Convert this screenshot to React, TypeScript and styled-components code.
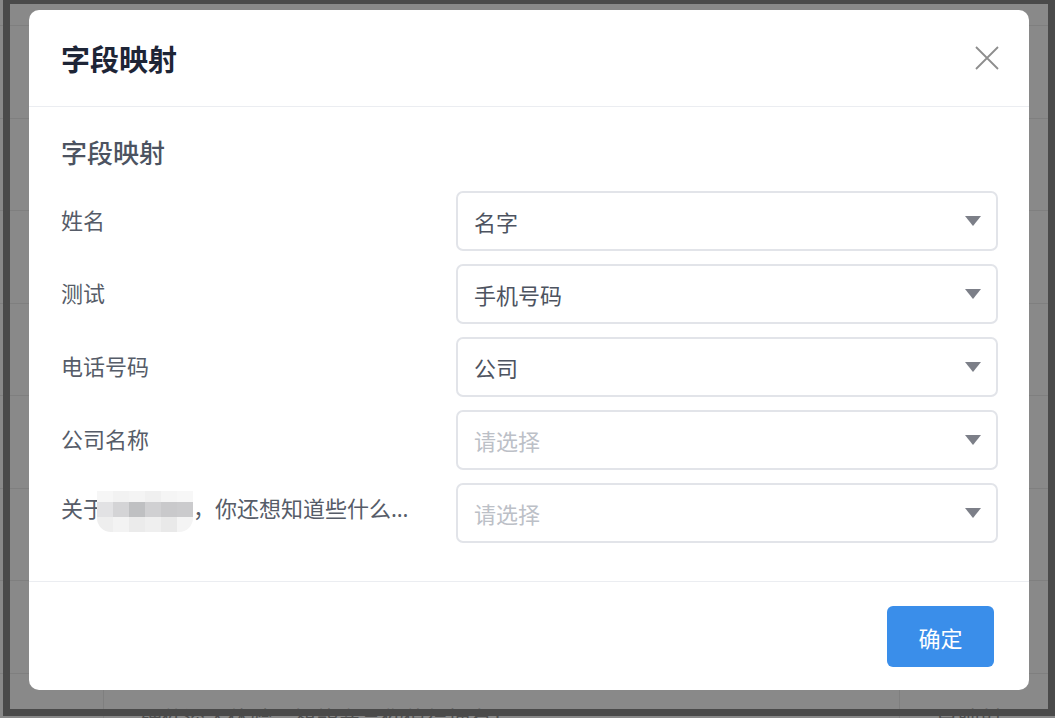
import React from 'react'
import styled, { createGlobalStyle } from 'styled-components'

const GlobalStyle = createGlobalStyle`
  html, body {
    margin: 0;
    padding: 0;
  }
  body {
    font-family: "Noto Sans CJK SC", "Noto Sans", sans-serif;
  }
`

const fields = [
  { label: '姓名', value: '名字' },
  { label: '测试', value: '手机号码' },
  { label: '电话号码', value: '公司' },
  { label: '公司名称', value: '' },
]

// pixelated blur over the hidden product name
const mosaic = [
  ['#f6f6f6', '#f2f2f2', '#f4f4f4', '#f0f0f0', '#f5f5f5', '#f7f7f7'],
  ['#e2e2e4', '#d4d4d6', '#bfc0c2', '#d0d0d2', '#c9c9cb', '#cbcbcd'],
  ['#eeeeee', '#f3f3f3', '#ebebeb', '#efefef', '#e9e9e9', '#f4f4f4'],
]

const App: React.FC = () => {
  return (
    <>
      <GlobalStyle />
      <Screen>
        <BackTable>
          {Array.from({ length: 8 }).map((_, i) => (
            <BackRow key={i}>
              <BackCell />
              <BackCell>{i === 7 ? '硬件深入体验，智能产品你值得拥有！' : ''}</BackCell>
              <BackCell>{i === 7 ? '已映射' : ''}</BackCell>
            </BackRow>
          ))}
        </BackTable>

        <Mask>
          <Dialog>
            <Header>
              <Title>字段映射</Title>
              <CloseButton aria-label="close">
                <svg width="24" height="24" viewBox="0 0 24 24">
                  <path d="M1 1 L23 23 M23 1 L1 23" stroke="#8d8d8d" strokeWidth="1.8" fill="none" />
                </svg>
              </CloseButton>
            </Header>

            <Body>
              <SectionTitle>字段映射</SectionTitle>
              <Rows>
                {fields.map((f) => (
                  <Row key={f.label}>
                    <Label>{f.label}</Label>
                    <Select>
                      <SelectText $placeholder={!f.value}>{f.value || '请选择'}</SelectText>
                      <Caret />
                    </Select>
                  </Row>
                ))}
                <Row>
                  <Label>
                    关于
                    <Mosaic>
                      {mosaic.flat().map((c, i) => (
                        <MosaicCell key={i} $color={c} />
                      ))}
                    </Mosaic>
                    ，你还想知道些什么呢？
                  </Label>
                  <Select>
                    <SelectText $placeholder>请选择</SelectText>
                    <Caret />
                  </Select>
                </Row>
              </Rows>
            </Body>

            <Footer>
              <PrimaryButton>确定</PrimaryButton>
            </Footer>
          </Dialog>
        </Mask>

        <Frame />
      </Screen>
    </>
  )
}

const Screen = styled.div`
  position: relative;
  width: 1055px;
  height: 718px;
  overflow: hidden;
  background: #898989;
`

const BackTable = styled.div`
  padding-top: 25px;
  display: flex;
  flex-direction: column;
`

const BackRow = styled.div`
  display: grid;
  grid-template-columns: 103px 796px 1fr;
  height: 92.5px;
  flex-shrink: 0;
  border-top: 1px solid #7f7f7f;
  box-sizing: border-box;
`

const BackCell = styled.div`
  border-left: 1px solid #7f7f7f;
  padding: 28px 0 0 36px;
  font-size: 22px;
  line-height: 30px;
  color: #4f4f4f;
  white-space: nowrap;
  overflow: hidden;

  &:first-child {
    border-left: none;
  }
`

const Mask = styled.div`
  position: absolute;
  inset: 0;
  padding: 10px 0 0 29px;
`

const Frame = styled.div`
  position: absolute;
  left: 3px;
  top: 0;
  width: 1052px;
  height: 716px;
  box-sizing: border-box;
  border-style: solid;
  border-color: #4a4a4a;
  border-width: 4px 7px 7px 7px;
  pointer-events: none;
`

const Dialog = styled.div`
  width: 1000px;
  height: 680px;
  background: #ffffff;
  border-radius: 10px;
  display: flex;
  flex-direction: column;
  overflow: hidden;
`

const Header = styled.div`
  height: 96px;
  flex-shrink: 0;
  padding: 0 30px 0 32px;
  display: flex;
  align-items: center;
  justify-content: space-between;
  border-bottom: 1px solid #ebedf1;
`

const Title = styled.h2`
  margin: 0;
  font-size: 29px;
  font-weight: 700;
  color: #1e2536;
  line-height: 1;
`

const CloseButton = styled.button`
  border: none;
  background: transparent;
  padding: 0;
  width: 24px;
  height: 24px;
  display: flex;
  cursor: pointer;
`

const Body = styled.div`
  flex: 1;
  padding: 27px 31px 38px 32px;
  display: flex;
  flex-direction: column;
  border-bottom: 1px solid #ebedf1;
`

const SectionTitle = styled.div`
  font-size: 26px;
  font-weight: 500;
  line-height: 36px;
  color: #4c5361;
  margin-bottom: 21px;
`

const Rows = styled.div`
  display: flex;
  flex-direction: column;
  gap: 13px;
`

const Row = styled.div`
  display: grid;
  grid-template-columns: 395px 1fr;
  align-items: center;
  height: 60px;
`

const Label = styled.div`
  font-family: "Noto Sans", "Noto Sans CJK SC", sans-serif;
  font-size: 22px;
  line-height: 30px;
  color: #565c68;
  padding-right: 32px;
  white-space: nowrap;
  overflow: hidden;
  text-overflow: ellipsis;
  margin-top: -3px;
`

const Mosaic = styled.span`
  display: inline-grid;
  grid-template-columns: repeat(6, 16px);
  grid-template-rows: 11px 15px 15px;
  width: 96px;
  height: 41px;
  margin-left: -8px;
  vertical-align: middle;
  border-radius: 0 0 14px 14px;
  overflow: hidden;
  filter: blur(0.6px);
`

const MosaicCell = styled.span<{ $color: string }>`
  background: ${(p) => p.$color};
`

const Select = styled.div`
  height: 60px;
  box-sizing: border-box;
  border: 2px solid #e2e4e9;
  border-radius: 7px;
  display: flex;
  align-items: center;
  justify-content: space-between;
  padding: 0 15px 0 16px;
  background: #ffffff;
`

const SelectText = styled.span<{ $placeholder?: boolean }>`
  font-size: 22px;
  color: ${(p) => (p.$placeholder ? '#bcc0c7' : '#4d5360')};
`

const Caret = styled.span`
  width: 0;
  height: 0;
  border-left: 8.5px solid transparent;
  border-right: 8.5px solid transparent;
  border-top: 10px solid #7c7f88;
`

const Footer = styled.div`
  height: 108px;
  flex-shrink: 0;
  display: flex;
  justify-content: flex-end;
  align-items: flex-start;
  padding: 24px 35px 0 0;
  box-sizing: border-box;
`

const PrimaryButton = styled.button`
  width: 107px;
  height: 61px;
  border: none;
  border-radius: 6px;
  background: #3a8eea;
  color: #ffffff;
  font-family: "Noto Sans CJK SC", "Noto Sans", sans-serif;
  font-size: 22px;
  cursor: pointer;
`

export default App
